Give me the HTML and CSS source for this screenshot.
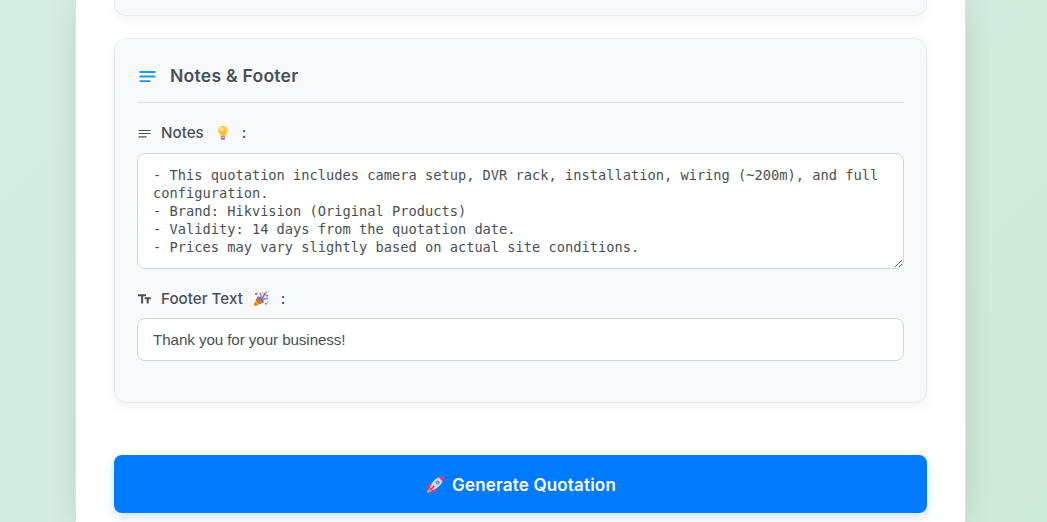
FILE: index.html
```html
<!DOCTYPE html>
<html lang="en">
<head>
<meta charset="utf-8">
<title>Quotation</title>
<link rel="stylesheet" href="styles.css">
</head>
<body>
<main class="sheet">
  <section class="card card-previous"></section>
  <section class="card notes-card">
    <h2 class="heading">
      <svg class="heading-icon" viewBox="0 0 20 20"><path d="M2.500 6h16M2.500 10.500h16M2.500 15.200h11" stroke="#2196f3" stroke-width="1.8" fill="none"/></svg>
      <span>Notes &amp; Footer</span>
    </h2>
    <label class="label" for="notes">
      <svg class="label-icon" viewBox="0 0 15 15"><path d="M1.500 4.500h12M1.500 7.500h12M1.500 10.900h8" stroke="#495057" stroke-width="1.200" fill="none"/></svg>
      <span class="label-text">Notes</span>
      <svg class="emoji" viewBox="0 0 16 16">
        <path d="M5.8 11h4.4v2.7L9.2 15H6.8l-1-1.3z" fill="#9b86ad"/>
        <path d="M8 .7a4.900 4.900 0 0 0-4.900 4.900c0 2.300 1.600 3.100 2.300 5.700h5.200c.7-2.600 2.300-3.400 2.300-5.700A4.900 4.900 0 0 0 8 .7z" fill="#ffc83d"/>
        <circle cx="6.600" cy="4" r="2" fill="#ffe48a"/>
        <path d="M6.300 7.200l1.200.5v3.500M9.700 7.200l-1.200.5v3.500" stroke="#f8ab30" stroke-width=".7" fill="none"/>
        <path d="M5.900 12.500h4.200" stroke="#d4c5df" stroke-width=".6"/>
      </svg>
      <span>:</span>
    </label>
    <textarea class="field notes" id="notes" spellcheck="false">- This quotation includes camera setup, DVR rack, installation, wiring (~200m), and full configuration.
- Brand: Hikvision (Original Products)
- Validity: 14 days from the quotation date.
- Prices may vary slightly based on actual site conditions.</textarea>
    <label class="label label-footer" for="footer">
      <svg class="label-icon" viewBox="0 0 15 15"><path d="M1 2.200h8v2H6.100V11.500h-2V4.200H1zM7.700 5.300h6v1.900h-2v4.300h-2V7.200h-2z" fill="#495057"/></svg>
      <span class="label-text">Footer Text</span>
      <svg class="emoji emoji-party" viewBox="0 0 16 16">
        <path d="M4.300 5.500L.8 14.200c-.2.700.4 1.100 1 .9l9-3.500z" fill="#f5a623"/>
        <path d="M3.600 7.500l4.800 5-2 .8-3.700-3.900zM1.900 11.400l2.600 2.700-1.500.6-1.700-1.800z" fill="#d66b2c"/>
        <ellipse cx="7.500" cy="8.600" rx="1.600" ry="4.200" transform="rotate(-46 7.500 8.600)" fill="#9a6a78"/>
        <path d="M6.800 7.500c1.500-1.500 1.700-3.700.2-5.700" stroke="#2899f5" stroke-width="1.400" fill="none"/>
        <path d="M8.300 7.800C11 6.600 10.200 4 12.500 2.200" stroke="#f01aa8" stroke-width="1.500" fill="none"/>
        <path d="M9.500 9.300c1.600-2 3-2.300 5.300-1.700" stroke="#2899f5" stroke-width="1.500" fill="none"/>
        <path d="M2.200 2h1.800v1.800H2.200zM13.300 3.800h1.600v1.600h-1.600zM12 12h1.600v1.600H12z" fill="#f01aa8"/>
        <path d="M9 .8h1.500v1.500H9zM13.500 10h1.400v1.400h-1.400z" fill="#ffb52e"/>
        <path d="M12.500.6h1.300v1.300h-1.300z" fill="#2899f5"/>
      </svg>
      <span>:</span>
    </label>
    <input class="field footer-input" id="footer" type="text" value="Thank you for your business!">
  </section>
  <button class="submit" type="button">
    <svg class="rocket" viewBox="0 0 18 18">
      <path d="M4.300 12l2 2c-.7 1.700-2.500 2.700-5.300 2.900C1.100 14.500 2.300 12.700 4.300 12z" fill="#ff9838"/>
      <path d="M6.500 7.700C3.700 7.200 1.900 8.600 1 12l4-.6zM10.500 11.500c.4 2.900-.8 4.500-4 5.500l.5-4z" fill="#f92f60"/>
      <path d="M17.300.8C11.400.6 7 4 4 11.300l2.800 2.800C13.900 11.200 17.300 6.500 17.300.8z" fill="#dcd7e5"/>
      <path d="M17.300.8c-1.700 0-3.300.2-4.600.8l3.800 3.900c.6-1.500.8-3.100.8-4.700z" fill="#f92f60"/>
      <circle cx="11.600" cy="6.500" r="2.100" fill="#6292c8"/><circle cx="11.600" cy="6.500" r="1.100" fill="#70b7ee"/>
      <path d="M4.300 13.800l4-4" stroke="#f92f60" stroke-width="1.800"/>
    </svg>
    <span>Generate Quotation</span>
  </button>
</main>
</body>
</html>
```
FILE: styles.css
```css
* { box-sizing: border-box; }

html, body { height: 100%; }

body {
  margin: 0;
  overflow: hidden;
  color: #495057;
  font-family: Inter, sans-serif;
  background: linear-gradient(135deg, #d6ede3 0%, #d4ebdf 50%, #cde9d7 100%);
}

.sheet {
  display: flex;
  flex-direction: column;
  width: 891px;
  height: 100%;
  margin-left: 75px;
  padding: 0 38px;
  background: #fff;
  border: solid #dce3e1;
  border-width: 0 1px;
  box-shadow: 0 -20px 30px rgba(0, 0, 0, .055), 0 20px 30px rgba(0, 0, 0, .055);
}

.card {
  flex: none;
  background: #f8f9fb;
  border: 1px solid #e9ecef;
  border-radius: 12px;
  box-shadow: 0 4px 12px rgba(0, 0, 0, .05);
}

.card-previous {
  height: 16px;
  border-top: 0;
  border-radius: 0 0 12px 12px;
}

.notes-card {
  height: 365px;
  margin-top: 22px;
  padding: 22px;
}

.heading {
  display: flex;
  align-items: center;
  gap: 13px;
  height: 42px;
  margin: 0 0 20px;
  padding-bottom: 12px;
  border-bottom: 1px solid #dee2e6;
  font-size: 17.6px;
  font-weight: 600;
  letter-spacing: .22px;
  line-height: 28px;
}

.heading-icon { width: 20px; height: 20px; }

.label {
  display: flex;
  align-items: center;
  height: 20px;
  margin-bottom: 10px;
  font-size: 15.2px;
  font-weight: 500;
  line-height: 20px;
}

.label-icon { width: 15px; height: 15px; margin-right: 9px; }
.emoji { width: 16px; height: 16px; margin: 0 11px; }
.emoji-party { margin: 0 12px 0 10px; }

.field {
  display: block;
  width: 100%;
  margin: 0;
  padding: 12px 15px;
  background: #fff;
  border: 1px solid #ced4da;
  border-radius: 8px;
  outline: 0;
  color: #495057;
}

.notes {
  height: 116px;
  overflow: hidden;
  resize: vertical;
  font: 13.7px/18px "DejaVu Sans Mono", monospace;
}

.label-footer { margin: 20px 0 9px; }

.footer-input {
  height: 43px;
  font: 15.2px/17px "Liberation Sans", Arial, sans-serif;
  letter-spacing: -.09px;
}

.submit {
  display: flex;
  flex: none;
  align-items: center;
  justify-content: center;
  gap: 8px;
  height: 58px;
  margin-top: 52px;
  padding: 2px 0 0 1px;
  border: 0;
  border-radius: 8px;
  background: #007bff;
  box-shadow: 0 4px 12px rgba(0, 123, 255, .2);
  color: #fff;
  font: 600 17px/24px Inter, sans-serif;
  letter-spacing: .18px;
}

.rocket { width: 18px; height: 18px; }
```
